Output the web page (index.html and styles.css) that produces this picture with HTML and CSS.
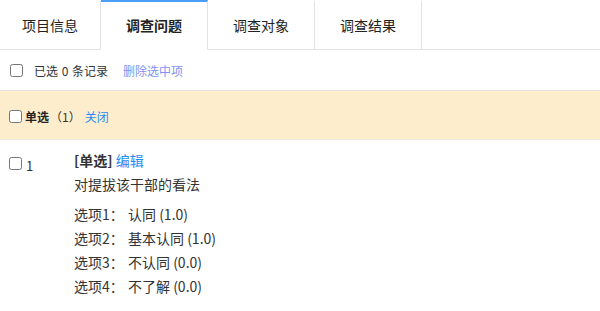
FILE: index.html
```html
<!DOCTYPE html>
<html lang="zh-CN">
<head>
<meta charset="utf-8">
<title>调查问题</title>
<link rel="stylesheet" href="styles.css">
</head>
<body>
<div class="tabs">
  <div class="tab tab-first">项目信息</div>
  <div class="tab tab-active">调查问题</div>
  <div class="tab">调查对象</div>
  <div class="tab">调查结果</div>
  <div class="tab-fill"></div>
</div>
<div class="toolbar">
  <input type="checkbox" class="cb">
  <span class="toolbar-text">已选 0 条记录</span>
  <a class="link-muted">删除选中项</a>
</div>
<div class="group">
  <input type="checkbox" class="cb">
  <span class="group-name">单选</span>
  <span class="group-count">（1）</span>
  <a class="link">关闭</a>
</div>
<div class="question">
  <div class="q-left">
    <input type="checkbox" class="cb">
    <span class="q-num">1</span>
  </div>
  <div class="q-body">
    <div class="q-head"><span class="q-type">[单选]</span> <a class="link">编辑</a></div>
    <div class="q-title">对提拔该干部的看法</div>
    <div class="q-options">
      <div class="opt"><span class="opt-label">选项1：</span><span>认同 (1.0)</span></div>
      <div class="opt"><span class="opt-label">选项2：</span><span>基本认同 (1.0)</span></div>
      <div class="opt"><span class="opt-label">选项3：</span><span>不认同 (0.0)</span></div>
      <div class="opt"><span class="opt-label">选项4：</span><span>不了解 (0.0)</span></div>
    </div>
  </div>
</div>
</body>
</html>
```

FILE: styles.css
```css
* { box-sizing: border-box; }
html, body { margin: 0; padding: 0; background: #fff; }
body {
  font-family: "Noto Sans CJK SC", "Microsoft YaHei", sans-serif;
  color: #333;
  font-size: 14px;
}
a { text-decoration: none; cursor: pointer; }
.cb { margin: 0; width: 13px; height: 13px; }

.tabs { display: flex; height: 50px; }
.tab {
  width: 107px;
  height: 50px;
  border-top: 2px solid transparent;
  border-right: 1px solid #e3e3e3;
  border-bottom: 1px solid #e3e3e3;
  text-align: center;
  line-height: 47px;
  font-size: 14px;
  color: #222;
}
.tab-first { width: 101px; }
.tab-active {
  border-top-color: #4a9ef5;
  border-bottom-color: #fff;
  font-weight: bold;
}
.tab-fill { flex: 1; border-bottom: 1px solid #e3e3e3; }

.toolbar {
  display: flex;
  align-items: center;
  height: 41px;
  padding-left: 10px;
  border-bottom: 1px solid #e3e3e3;
  font-size: 12px;
}
.toolbar-text { margin-left: 11px; color: #333; word-spacing: 1px; }
.link-muted { margin-left: 15px; color: #7f93f2; }

.group {
  display: flex;
  align-items: center;
  height: 49px;
  padding-left: 9px;
  padding-top: 3px;
  background: #fdedcc;
  border-bottom: 1px solid #e8e8e8;
  font-size: 12px;
}
.group .cb { margin-right: 3px; }
.group-name { font-weight: bold; color: #222; }
.group-count { color: #333; margin-left: 1px; }
.link { color: #1f8cf5; }
.group .link { margin-left: 4px; }

.question { display: flex; }
.q-left {
  width: 74px;
  padding-left: 9px;
  padding-top: 17px;
  display: flex;
  align-items: flex-start;
}
.q-num { font-size: 13px; line-height: 13px; margin-left: 4px; margin-top: 2px; }
.q-body { padding-top: 8px; font-size: 14px; }
.q-head { line-height: 24px; color: #333; }
.q-type { font-weight: bold; color: #333; }
.q-title { line-height: 24px; }
.q-options { margin-top: 6px; }
.opt { line-height: 24px; display: flex; }
.opt-label { width: 54px; }
```
